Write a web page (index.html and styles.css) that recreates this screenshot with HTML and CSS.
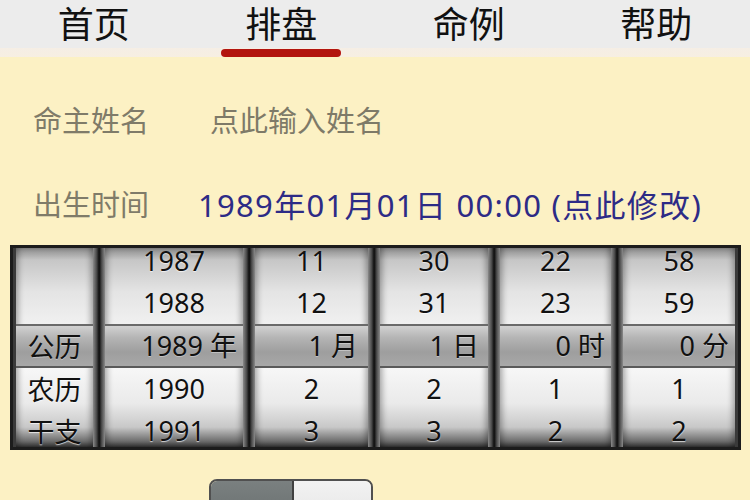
FILE: index.html
```html
<!DOCTYPE html>
<html lang="zh-CN">
<head>
<meta charset="utf-8">
<title>排盘</title>
<link rel="stylesheet" href="styles.css">
</head>
<body>
<div class="app">
  <nav class="tabs">
    <div class="tab"><span class="tab-text">首页</span></div>
    <div class="tab active"><span class="tab-text">排盘</span><span class="tab-bar"></span></div>
    <div class="tab"><span class="tab-text">命例</span></div>
    <div class="tab"><span class="tab-text">帮助</span></div>
  </nav>
  <main class="main">
    <div class="row">
      <span class="label">命主姓名</span>
      <span class="value name">点此输入姓名</span>
    </div>
    <div class="row">
      <span class="label">出生时间</span>
      <span class="value time">1989年01月01日 00:00 (点此修改)</span>
    </div>
    <div class="picker">
      <div class="col col-label">
        <div class="list">
          <div class="cell"></div>
          <div class="cell"></div>
          <div class="cell sel center">公历</div>
          <div class="cell">农历</div>
          <div class="cell">干支</div>
        </div>
      </div>
      <div class="divider"></div>
      <div class="col col-year">
        <div class="list">
          <div class="cell">1987</div>
          <div class="cell">1988</div>
          <div class="cell sel">1989 年</div>
          <div class="cell">1990</div>
          <div class="cell">1991</div>
        </div>
      </div>
      <div class="divider"></div>
      <div class="col col-month">
        <div class="list">
          <div class="cell">11</div>
          <div class="cell">12</div>
          <div class="cell sel">1 月</div>
          <div class="cell">2</div>
          <div class="cell">3</div>
        </div>
      </div>
      <div class="divider"></div>
      <div class="col col-day">
        <div class="list">
          <div class="cell">30</div>
          <div class="cell">31</div>
          <div class="cell sel">1 日</div>
          <div class="cell">2</div>
          <div class="cell">3</div>
        </div>
      </div>
      <div class="divider"></div>
      <div class="col col-hour">
        <div class="list">
          <div class="cell">22</div>
          <div class="cell">23</div>
          <div class="cell sel">0 时</div>
          <div class="cell">1</div>
          <div class="cell">2</div>
        </div>
      </div>
      <div class="divider"></div>
      <div class="col col-min">
        <div class="list">
          <div class="cell">58</div>
          <div class="cell">59</div>
          <div class="cell sel">0 分</div>
          <div class="cell">1</div>
          <div class="cell">2</div>
        </div>
      </div>
    </div>
    <div class="toggle">
      <span class="tg-left"></span>
      <span class="tg-right"></span>
    </div>
  </main>
</div>
</body>
</html>
```

FILE: styles.css
```css
html, body {
  margin: 0;
  padding: 0;
}
body {
  width: 750px;
  height: 500px;
  overflow: hidden;
  font-family: "Noto Sans", "Noto Sans CJK SC", sans-serif;
  background: #fcf1c4;
}
.app {
  width: 750px;
  height: 500px;
  overflow: hidden;
  display: flex;
  flex-direction: column;
}
.tabs {
  height: 58px;
  display: grid;
  grid-template-columns: repeat(4, 1fr);
  background: linear-gradient(#ececec 0, #ececec 48px, #f5eee5 48px, #f7efe2 58px);
}
.tab {
  display: flex;
  flex-direction: column;
  align-items: center;
}
.tab-text {
  font-family: "Noto Sans CJK SC", sans-serif;
  font-size: 36px;
  line-height: 44px;
  height: 49px;
  color: #111;
}
.tab-bar {
  width: 120px;
  height: 8px;
  border-radius: 4px;
  background: #b3150f;
}
.main {
  flex: 1;
  background: #fcf1c4;
  padding-top: 20px;
}
.row {
  height: 84px;
  display: flex;
  align-items: center;
  padding-left: 33px;
}
.label {
  font-family: "Noto Sans CJK SC", sans-serif;
  font-size: 29px;
  color: #7f7b69;
  width: 116px;
}
.value {
  font-family: "Noto Sans CJK SC", sans-serif;
  font-size: 29px;
  color: #7e7a68;
}
.value.name {
  margin-left: 61px;
}
.value.time {
  margin-left: 49px;
  font-family: "Noto Sans", "Noto Sans CJK SC", sans-serif;
  font-size: 31px;
  letter-spacing: 1.3px;
  color: #2d2b86;
}
.picker {
  margin-left: 10px;
  width: 719px;
  height: 199px;
  border: 3px solid #1c1c1c;
  padding: 0 3px;
  background: #3a3a3a;
  display: flex;
}
.col {
  height: 199px;
  overflow: hidden;
  background: linear-gradient(#8a8a8a 0%, #c6c6c6 6%, #e4e4e4 22%, #f0f0f0 38%, #f7f7f7 60%, #eaeaea 78%, #c8c8c8 90%, #6e6e6e 97%, #333 100%);
  box-shadow: inset 5px 0 6px -3px rgba(0, 0, 0, 0.35), inset -5px 0 6px -3px rgba(0, 0, 0, 0.35);
}
.col-label { width: 77px; }
.col-year { width: 138px; }
.col-month { width: 113px; }
.col-day { width: 108px; }
.col-hour { width: 111px; }
.col-min { width: 112px; }
.list {
  margin-top: -8px;
}
.cell {
  height: 42px;
  line-height: 42px;
  text-align: center;
  font-family: "Noto Sans", "Noto Sans CJK SC", sans-serif;
  font-size: 27px;
  color: #111;
  text-shadow: 0 1px 1px rgba(255, 255, 255, 0.7);
}
.col-label .cell {
  font-family: "Noto Sans CJK SC", sans-serif;
  font-size: 27px;
}
.cell.sel {
  height: 40px;
  line-height: 40px;
  border-top: 2px solid #6a6a6a;
  border-bottom: 2px solid #5a5a5a;
  background: linear-gradient(#d2d2d2, #b4b4b4 30%, #9e9e9e 65%, #a8a8a8);
  text-align: right;
  padding-right: 6px;
  text-shadow: 0 1px 0 rgba(255, 255, 255, 0.35);
}
.cell.sel.center {
  text-align: center;
  padding-right: 0;
}
.col-month .cell.sel { padding-right: 10px; }
.col-day .cell.sel { padding-right: 9px; }
.divider {
  width: 12px;
  height: 199px;
  background: linear-gradient(to right, #8a8a8a 0%, #4a4a4a 30%, #151515 48%, #151515 55%, #4a4a4a 72%, #8a8a8a 100%);
}
.toggle {
  margin: 29px 0 0 209px;
  width: 160px;
  height: 40px;
  border: 2px solid #505050;
  border-radius: 8px;
  overflow: hidden;
  display: flex;
}
.tg-left {
  width: 81px;
  background: linear-gradient(#7a8080, #6a7070);
  border-right: 2px solid #404040;
}
.tg-right {
  flex: 1;
  background: linear-gradient(#f2f2f2, #e6e6e6);
}
```
